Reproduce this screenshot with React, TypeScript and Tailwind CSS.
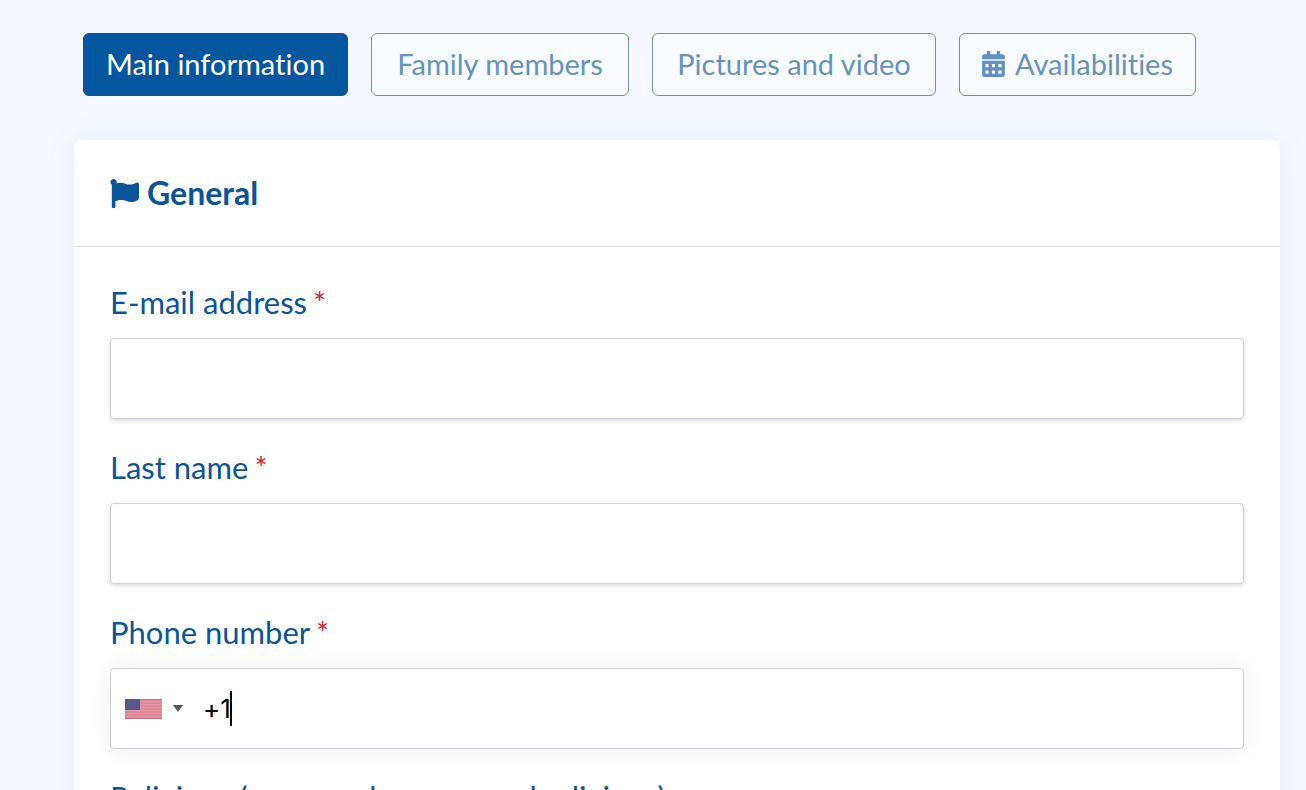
import { FaCalendarAlt, FaFlag } from 'react-icons/fa';

const tabs = [
  { id: 'main', label: 'Main information', width: 'w-[265px]', active: true },
  { id: 'family', label: 'Family members', width: 'w-[258px]' },
  { id: 'media', label: 'Pictures and video', width: 'w-[284px]' },
  { id: 'availabilities', label: 'Availabilities', width: 'w-[237px]', icon: true },
];

function Label({ htmlFor, children, required = true }: { htmlFor: string; children: string; required?: boolean }) {
  return (
    <label htmlFor={htmlFor} className="block pb-4 text-[31px] leading-10 text-[#0b549a]">
      {children}
      {required && <span className="ml-1.5 text-[#d7262c]">*</span>}
    </label>
  );
}

function TextField({
  id,
  label,
  type = 'text',
  required = true,
}: {
  id: string;
  label: string;
  type?: string;
  required?: boolean;
}) {
  return (
    <div>
      <Label htmlFor={id} required={required}>
        {label}
      </Label>
      <input
        id={id}
        type={type}
        className="block h-[81px] w-full rounded-sm border border-[#cfd0d6] bg-white px-4 text-[30px] shadow-[0_2px_5px_rgba(0,0,0,0.14)] outline-none"
      />
    </div>
  );
}

function UsFlag() {
  return (
    <svg viewBox="0 0 37 20" className="h-5 w-[37px]" aria-hidden="true">
      <rect width="37" height="20" fill="#dd8795" />
      {[2, 5, 8, 11, 14, 17].map((y) => (
        <rect key={y} y={y} width="37" height="1" fill="#e19aa5" />
      ))}
      <rect width="37" height="1" fill="#c87983" />
      <rect y="19" width="37" height="1" fill="#cf7080" />
      <rect width="15" height="11" fill="#58578b" />
    </svg>
  );
}

function PhoneField() {
  return (
    <div>
      <Label htmlFor="phone">Phone number</Label>
      <div className="flex h-[81px] items-center rounded-sm border border-[#cfd0d6] bg-white pl-3.5 shadow-[0_0_24px_rgba(0,0,0,0.07)]">
        <button type="button" aria-label="Select country" className="flex items-center gap-[11px]">
          <UsFlag />
          <svg viewBox="0 0 10 7" className="h-[7px] w-2.5" aria-hidden="true">
            <path d="M0 0h10L5 7z" fill="#555" />
          </svg>
        </button>
        <div className="relative ml-5 flex-1">
          <input
            id="phone"
            type="tel"
            defaultValue="+1"
            className="block w-full bg-transparent font-['Inter',sans-serif] text-[26px] leading-10 text-black caret-transparent outline-none"
          />
          {/* text cursor */}
          <span className="absolute top-0.5 left-[27px] h-[35px] w-0.5 bg-black" />
        </div>
      </div>
    </div>
  );
}

export default function App() {
  return (
    <div className="h-screen overflow-hidden bg-[#f5f9ff] font-['Lato',sans-serif] [font-variant-ligatures:none]">
      <nav className="flex gap-[23px] pt-[33px] pl-[83px]">
        {tabs.map((tab) => (
          <button
            key={tab.id}
            type="button"
            className={`flex h-[63px] shrink-0 items-center justify-center gap-2.5 rounded-md border pb-0.5 text-[29px] whitespace-nowrap ${tab.width} ${
              tab.active
                ? 'border-[#04569f] bg-[#04569f] text-white'
                : 'border-[#6d90b3] bg-[#f8fbff] text-[#6692bd]'
            }`}
          >
            {tab.icon && <FaCalendarAlt className="h-[26px] w-[23px] text-[#6190c2]" />}
            {tab.label}
          </button>
        ))}
      </nav>

      <main className="mt-11 mr-[26px] ml-[74px] rounded-t-lg bg-white shadow-[0_0_32px_rgba(50,70,140,0.08)]">
        <header className="flex h-[107px] items-center gap-2 border-b border-[#dcdfe4] px-9 text-[#0b549a]">
          <FaFlag size={29} />
          <h1 className="text-[32px] leading-10 font-bold">General</h1>
        </header>
        <form className="flex flex-col gap-7 px-9 pt-[35px]">
          <TextField id="email" label="E-mail address" type="email" />
          <TextField id="last-name" label="Last name" />
          <PhoneField />
          <TextField id="religion" label="Religions (you may have several religions)" required={false} />
        </form>
      </main>
    </div>
  );
}
